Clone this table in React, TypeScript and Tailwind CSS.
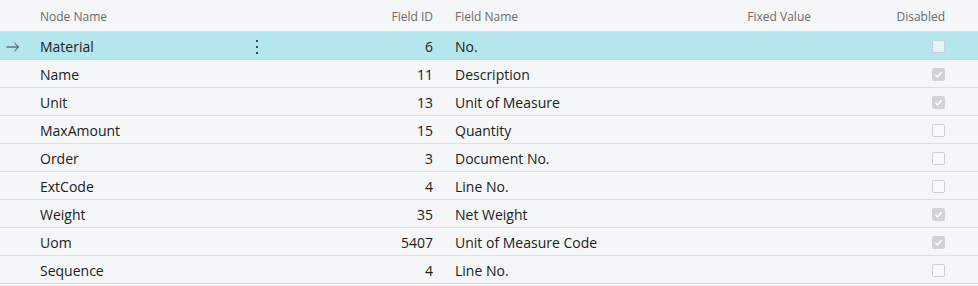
import React from "react";

type Row = {
  node: string;
  fieldId: number;
  fieldName: string;
  fixedValue: string;
  disabled: boolean;
};

const rows: Row[] = [
  { node: "Material", fieldId: 6, fieldName: "No.", fixedValue: "", disabled: false },
  { node: "Name", fieldId: 11, fieldName: "Description", fixedValue: "", disabled: true },
  { node: "Unit", fieldId: 13, fieldName: "Unit of Measure", fixedValue: "", disabled: true },
  { node: "MaxAmount", fieldId: 15, fieldName: "Quantity", fixedValue: "", disabled: false },
  { node: "Order", fieldId: 3, fieldName: "Document No.", fixedValue: "", disabled: false },
  { node: "ExtCode", fieldId: 4, fieldName: "Line No.", fixedValue: "", disabled: false },
  { node: "Weight", fieldId: 35, fieldName: "Net Weight", fixedValue: "", disabled: true },
  { node: "Uom", fieldId: 5407, fieldName: "Unit of Measure Code", fixedValue: "", disabled: true },
  { node: "Sequence", fieldId: 4, fieldName: "Line No.", fixedValue: "", disabled: false },
];

const cols = "grid grid-cols-[28px_204px_50px_163px_240px_138px_134px_21px]";

function CheckBox({ checked, active }: { checked: boolean; active: boolean }) {
  if (checked) {
    return (
      <span className="flex h-[13px] w-[13px] items-center justify-center rounded-[2px] bg-[#d2d3d5]">
        <svg width="9" height="9" viewBox="0 0 9 9" fill="none">
          <path d="M1.3 4.8 L3.5 6.9 L7.8 2" stroke="#ffffff" strokeWidth="1.4" />
        </svg>
      </span>
    );
  }
  return (
    <span
      className={
        active
          ? "block h-[13px] w-[13px] rounded-[2px] border border-[#c9d3d6] bg-[#e3f3f6]"
          : "block h-[13px] w-[13px] rounded-[2px] border border-[#cfd0d3] bg-[#f9f9fa]"
      }
    />
  );
}

export default function App() {
  return (
    <div className="h-[286px] w-[978px] overflow-hidden bg-[#f5f6f8] font-['Segoe_UI','Open_Sans',sans-serif] text-[#212121]">
      <div className={`${cols} h-[32px] items-center border-b border-[#dfe0e3] pt-[2px] text-[12px] text-[#6b6b6b]`}>
        <div />
        <div className="pl-[12px]">Node Name</div>
        <div />
        <div className="pr-[12px] text-right">Field ID</div>
        <div className="pl-[10px]">Field Name</div>
        <div className="pr-[12px] text-right">Fixed Value</div>
        <div className="pr-[12px] text-right">Disabled</div>
        <div />
      </div>
      {rows.map((row, i) => {
        const active = i === 0;
        return (
          <div
            key={i}
            className={`${cols} h-[28px] items-center border-b pt-[2px] text-[14px] ${
              active ? "border-[#c9d7da] bg-[#b4e7ed]" : "border-[#dfe0e3]"
            }`}
          >
            <div className="flex justify-center pr-[2px]">
              {active && (
                <svg width="14" height="10" viewBox="0 0 14 10" fill="none">
                  <path d="M0.5 5 H12.5 M8.5 1 L12.6 5 L8.5 9" stroke="#3a3a3a" strokeWidth="1" />
                </svg>
              )}
            </div>
            <div className="pl-[12px]">{row.node}</div>
            <div className="flex justify-center">
              {active && (
                <div className="flex flex-col gap-[4px]">
                  <span className="block h-[2px] w-[2px] bg-[#3c4650]" />
                  <span className="block h-[2px] w-[2px] bg-[#3c4650]" />
                  <span className="block h-[2px] w-[2px] bg-[#3c4650]" />
                </div>
              )}
            </div>
            <div className="pr-[12px] text-right">{row.fieldId}</div>
            <div className="pl-[10px]">{row.fieldName}</div>
            <div className="pr-[12px] text-right">{row.fixedValue}</div>
            <div className="flex justify-end pr-[12px]">
              <CheckBox checked={row.disabled} active={active} />
            </div>
            <div />
          </div>
        );
      })}
    </div>
  );
}
